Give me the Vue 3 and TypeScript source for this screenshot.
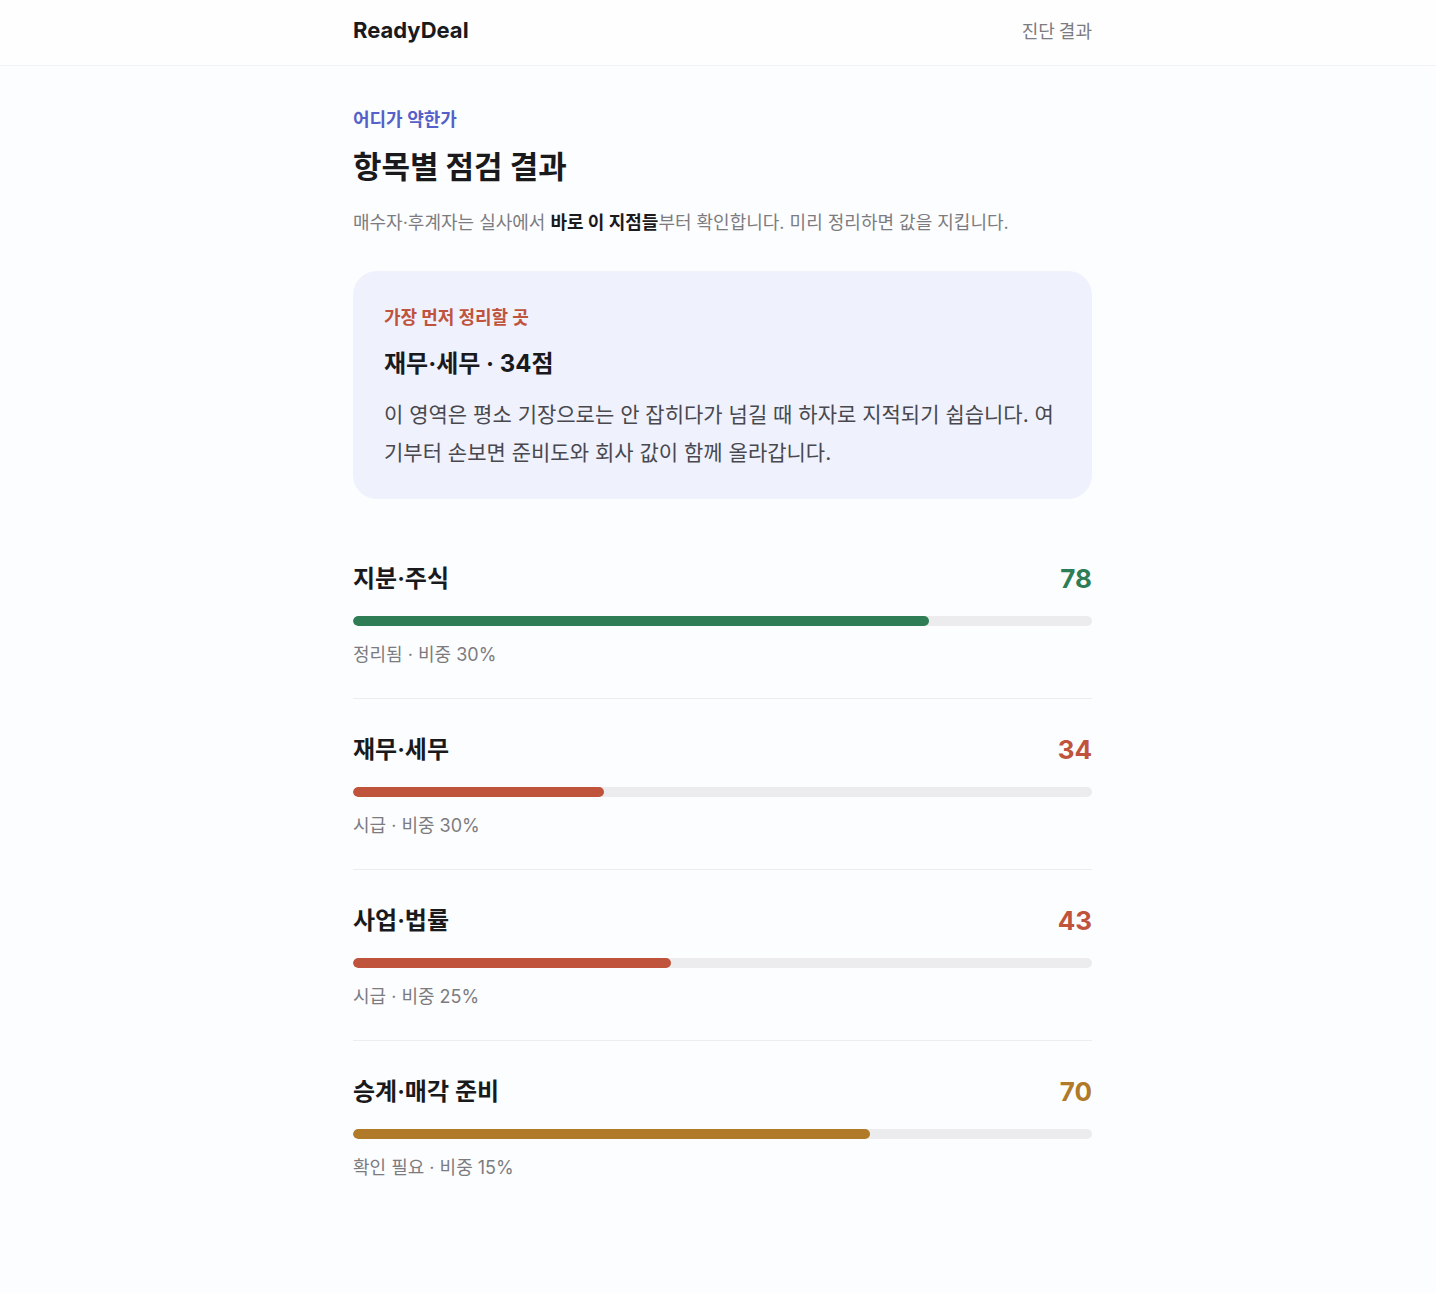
<script setup lang="ts">
interface Area {
  name: string
  score: number
  status: string
  weight: number
  tone: 'good' | 'warn' | 'bad'
}

const areas: Area[] = [
  { name: '지분·주식', score: 78, status: '정리됨', weight: 30, tone: 'good' },
  { name: '재무·세무', score: 34, status: '시급', weight: 30, tone: 'bad' },
  { name: '사업·법률', score: 43, status: '시급', weight: 25, tone: 'bad' },
  { name: '승계·매각 준비', score: 70, status: '확인 필요', weight: 15, tone: 'warn' },
]
</script>

<template>
  <div class="page">
    <header class="topbar">
      <div class="wrap topbar-row">
        <span class="brand">ReadyDeal</span>
        <span class="crumb">진단 결과</span>
      </div>
    </header>
    <main class="wrap content">
      <p class="eyebrow">어디가 약한가</p>
      <h1>항목별 점검 결과</h1>
      <p class="lead">매수자·후계자는 실사에서 <strong>바로 이 지점들</strong>부터 확인합니다. 미리 정리하면 값을 지킵니다.</p>

      <section class="callout">
        <p class="callout-label">가장 먼저 정리할 곳</p>
        <h2>재무·세무 · 34점</h2>
        <p class="callout-text">이 영역은 평소 기장으로는 안 잡히다가 넘길 때 하자로 지적되기 쉽습니다. 여기부터 손보면 준비도와 회사 값이 함께 올라갑니다.</p>
      </section>

      <ul class="areas">
        <li v-for="area in areas" :key="area.name" class="area" :class="area.tone">
          <div class="area-head">
            <h3>{{ area.name }}</h3>
            <span class="score">{{ area.score }}</span>
          </div>
          <div class="track">
            <div class="fill" :style="{ width: area.score + '%' }"></div>
          </div>
          <p class="note">{{ area.status }} · 비중 {{ area.weight }}%</p>
        </li>
      </ul>
    </main>
  </div>
</template>

<style>
body {
  background: #fcfdff;
}
</style>

<style scoped>
.page {
  font-family: Inter, "Noto Sans CJK KR", sans-serif;
  color: #1a1a1c;
}
h1, h2, h3, p, ul {
  margin: 0;
  padding: 0;
}
.wrap {
  max-width: 739px;
  margin: 0 auto;
  padding: 0 24px 0 33px;
}
.topbar {
  background: #fefefe;
  border-bottom: 1px solid #f1f2f4;
}
.topbar-row {
  display: flex;
  justify-content: space-between;
  align-items: center;
  padding-top: 14px;
  padding-bottom: 19px;
}
.brand {
  font-size: 22px;
  line-height: 32px;
  font-weight: 700;
}
.crumb {
  font-family: "Noto Sans CJK KR", sans-serif;
  font-size: 18px;
  line-height: 30px;
  color: #7c7c80;
}
.content {
  padding-top: 39px;
  padding-bottom: 96px;
}
.eyebrow {
  font-size: 18px;
  line-height: 30px;
  font-weight: 600;
  color: #5560c8;
}
h1 {
  margin-top: 8px;
  font-family: "Noto Sans CJK KR", sans-serif;
  font-size: 31px;
  line-height: 44px;
  font-weight: 700;
}
.lead {
  margin-top: 21px;
  font-size: 18px;
  line-height: 30px;
  color: #7c7c80;
}
.lead strong {
  color: #1a1a1c;
}
.callout {
  margin-top: 33px;
  padding: 30px 31px 27px;
  border-radius: 24px;
  background: #eff1fc;
}
.callout-label {
  font-family: "Noto Sans CJK KR", sans-serif;
  font-size: 18px;
  line-height: 30px;
  font-weight: 700;
  color: #c0533c;
}
h2 {
  margin-top: 13px;
  font-size: 24px;
  line-height: 40px;
  font-weight: 700;
}
.callout-text {
  margin-top: 12px;
  font-size: 21px;
  line-height: 38px;
  color: #48484e;
  word-break: break-all;
}
.areas {
  margin-top: 29px;
  list-style: none;
}
.area {
  padding: 31px 0 28px;
  border-bottom: 1px solid #ededf0;
}
.area:last-child {
  border-bottom: 0;
}
.area-head {
  display: flex;
  justify-content: space-between;
  align-items: center;
}
h3 {
  font-size: 24px;
  line-height: 40px;
  font-weight: 600;
}
.score {
  font-size: 26px;
  line-height: 40px;
  font-weight: 700;
}
.track {
  margin-top: 17px;
  height: 10px;
  border-radius: 5px;
  background: #ececee;
  overflow: hidden;
}
.fill {
  height: 100%;
  border-radius: 5px;
}
.note {
  margin-top: 14px;
  font-size: 18px;
  line-height: 30px;
  color: #7c7c80;
}
.good .score { color: #2e7d55; }
.good .fill { background: #2e7d55; }
.bad .score { color: #c0533c; }
.bad .fill { background: #c0533c; }
.warn .score { color: #b07a28; }
.warn .fill { background: #b07a28; }
</style>
